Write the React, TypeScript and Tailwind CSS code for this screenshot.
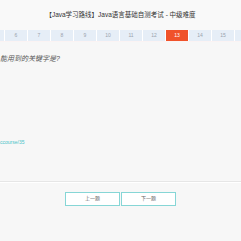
import React from "react";

const pages = [5, 6, 7, 8, 9, 10, 11, 12, 13, 14, 15, 16];

export default function App() {
  return (
    <div
      className="w-[241px] h-[241px] overflow-hidden bg-[#f7f7f7] flex flex-col"
      style={{ fontFamily: '"Liberation Sans", "Noto Sans CJK SC", sans-serif' }}
    >
      <div className="h-[30px] flex items-center justify-center text-[6.5px] text-[#333] bg-[#f9f9f9] whitespace-nowrap">
        【Java学习路线】Java语言基础自测考试 - 中级难度
      </div>
      <div className="h-[11px] bg-[#e6eef7] flex overflow-hidden">
        <div className="flex ml-[-19px] shrink-0">
          {pages.map((p) => (
            <div
              key={p}
              className={
                p === 13
                  ? "w-[23px] h-[11px] shrink-0 border-l border-white bg-[#f0522a] text-white text-[5px] flex items-center justify-center"
                  : "w-[23px] h-[11px] shrink-0 border-l border-white text-[#9aa3ad] text-[5px] flex items-center justify-center"
              }
            >
              {p === 5 || p === 16 ? "" : p}
            </div>
          ))}
        </div>
      </div>
      <div className="h-px bg-[#fbf3f3]" />
      <div className="pt-[12px] text-[7px] italic text-[#555] leading-[9px] whitespace-nowrap">
        能用到的关键字是?
      </div>
      <div className="pt-[76px] text-[5px] text-[#4cc3c8] leading-[6px] whitespace-nowrap">
        ccourse/35
      </div>
      <div className="mt-[36px] h-px bg-[#e6e6e6]" />
      <div className="h-px bg-white" />
      <div className="pt-[9px] flex justify-center gap-[1px]">
        <button className="w-[55px] h-[14px] border border-[#86d6d6] bg-white text-[5px] text-[#666] flex items-center justify-center">
          上一题
        </button>
        <button className="w-[55px] h-[14px] border border-[#86d6d6] bg-white text-[5px] text-[#666] flex items-center justify-center">
          下一题
        </button>
      </div>
    </div>
  );
}
